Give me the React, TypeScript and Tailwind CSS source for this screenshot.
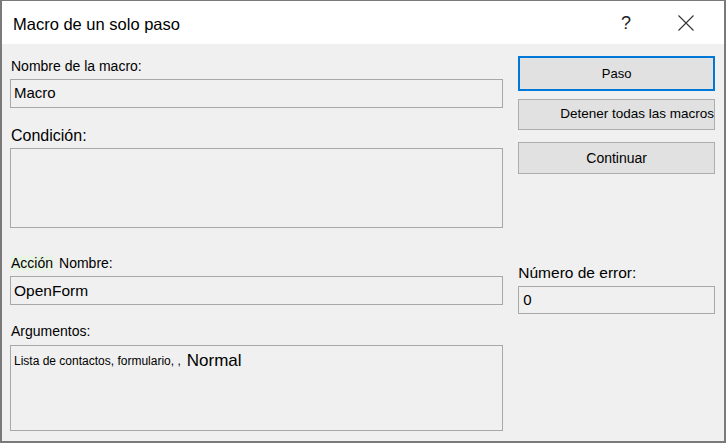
export default function App() {
  const font = { fontFamily: '"Liberation Sans", Arial, sans-serif' };
  return (
    <div
      className="w-[726px] h-[443px] flex flex-col border-t border-x-2 border-b-2 border-[#7a7a7a] bg-[#f0f0f0] text-[#000] overflow-hidden"
      style={font}
    >
      {/* title bar */}
      <div className="h-[43px] shrink-0 bg-white flex items-center">
        <div className="pl-[11px] text-[16.5px] flex-1 pt-[3px]">Macro de un solo paso</div>
        <div className="w-[60px] text-center text-[18px] text-[#222] font-light pt-[1px]">?</div>
        <div className="w-[60px] flex justify-center mr-[8px]">
          <svg width="16" height="16" viewBox="0 0 16 16" fill="none" stroke="#333" strokeWidth="1.1">
            <path d="M0.5 0.5 L15.5 15.5 M15.5 0.5 L0.5 15.5" />
          </svg>
        </div>
      </div>

      {/* body */}
      <div className="flex flex-1 pl-[8px] pr-[9px]">
        {/* left column */}
        <div className="w-[494px] flex flex-col">
          <div className="mt-[15px] h-[15px] pl-[1px] text-[14px] leading-[15px]">Nombre de la macro:</div>
          <div className="mt-[5px] h-[29px] border border-[#a8a8a8] px-[3px] text-[15px] flex items-center">Macro</div>

          <div className="mt-[19px] h-[18px] pl-[1px] text-[16px] leading-[18px]">Condición:</div>
          <div className="mt-[3px] h-[80px] border border-[#a8a8a8]" />

          <div className="mt-[28px] h-[15px] pl-[1px] text-[14px] leading-[15px] flex">
            <span className="bg-[#e8f3e4] pr-[1px]">Acción</span>
            <span className="ml-[5px]">Nombre:</span>
          </div>
          <div className="mt-[5px] h-[29px] border border-[#a8a8a8] px-[3px] text-[15.5px] flex items-center">OpenForm</div>

          <div className="mt-[19px] h-[15px] pl-[1px] text-[14px] leading-[15px]">Argumentos:</div>
          <div className="mt-[6px] h-[86px] border border-[#a8a8a8] px-[3px] pt-[5px] flex items-start">
            <span className="text-[12px] leading-[18px] mt-[1px]">Lista de contactos, formulario, , </span>
            <span className="text-[17px] leading-[18px] ml-[6px] mt-[1px]">Normal</span>
          </div>
        </div>

        {/* right column */}
        <div className="ml-[15px] w-[197px] flex flex-col">
          <div className="mt-[12px] h-[35px] border-2 border-[#0078d7] bg-[#e1e1e1] text-[13px] flex items-center justify-center">Paso</div>
          <div className="mt-[8px] h-[31px] border border-[#adadad] bg-[#e1e1e1] text-[13.5px] flex items-center justify-end whitespace-nowrap">
            Detener todas las macros
          </div>
          <div className="mt-[12px] h-[32px] border border-[#adadad] bg-[#e1e1e1] text-[14px] flex items-center justify-center">Continuar</div>

          <div className="mt-[90px] h-[18px] text-[15.5px] leading-[18px]">Número de error:</div>
          <div className="mt-[4px] h-[28px] border border-[#a8a8a8] px-[4px] text-[15px] flex items-center">0</div>
        </div>
      </div>
    </div>
  );
}
